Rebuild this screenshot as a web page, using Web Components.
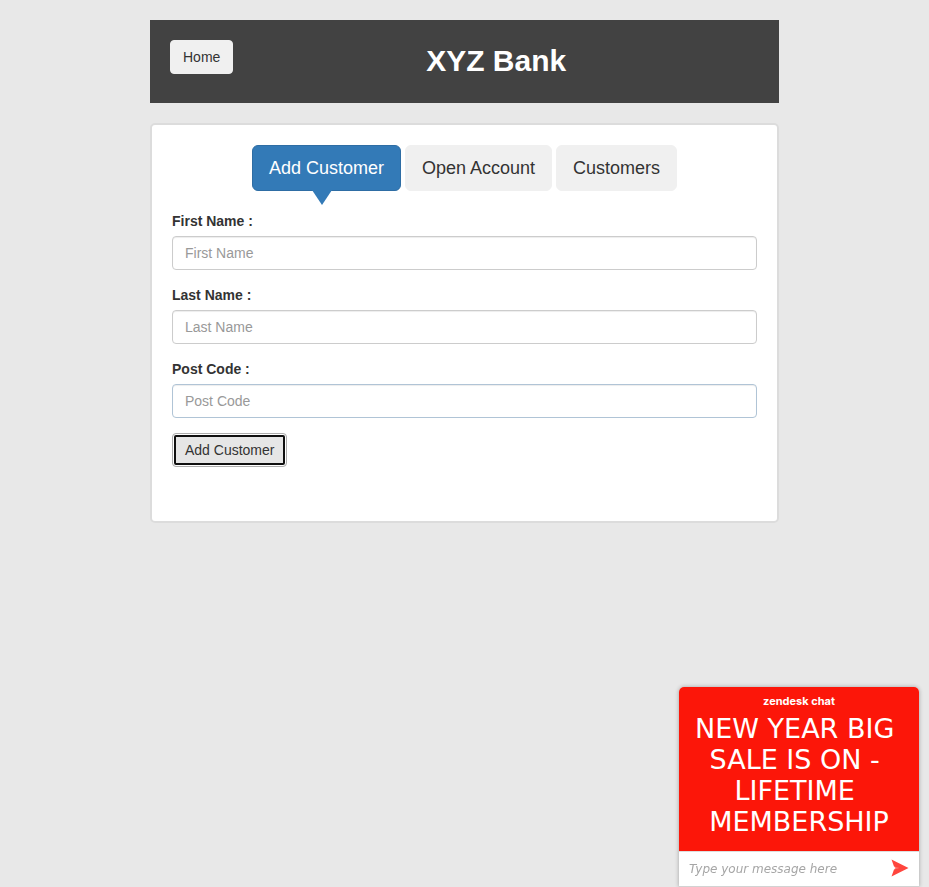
<!DOCTYPE html>
<html lang="en">
<head>
<meta charset="utf-8">
<meta name="viewport" content="width=device-width, initial-scale=1">
<title>XYZ Bank</title>
<style>
html,body{min-height:100%}
body{margin:0;background:#e8e8e8;color:#333;font:14px/20px "Liberation Sans",Arial,sans-serif}
main{margin:20px 150px;display:grid;gap:20px}
@media (max-width:760px){main{margin:20px}}
</style>
</head>
<body>
<main>
  <bank-header>XYZ Bank</bank-header>
  <bank-card>
    <bank-tabs slot="tabs">
      <bank-tab active>Add Customer</bank-tab>
      <bank-tab>Open Account</bank-tab>
      <bank-tab>Customers</bank-tab>
    </bank-tabs>
    <customer-form></customer-form>
  </bank-card>
</main>
<chat-widget>NEW YEAR BIG&nbsp;<br>SALE IS ON -&nbsp;<br>LIFETIME&nbsp;<br>MEMBERSHIP</chat-widget>
<script>
class Base extends HTMLElement{
  connectedCallback(){
    if(this.shadowRoot)return;
    this.attachShadow({mode:"open"}).innerHTML="<style>*{box-sizing:border-box}"+this.css()+"</style>"+this.html();
  }
}
customElements.define("bank-header",class extends Base{
  css(){return `
    :host{display:flex;align-items:flex-start;background:#424242;padding:20px 20px 22px}
    button{font:14px/20px "Liberation Sans",Arial,sans-serif;color:#333;background:#f0f0f0;border:1px solid #f0f0f0;border-radius:4px;padding:6px 12px}
    h1{flex:1;margin:0;text-align:center;color:#fff;font-size:30px;line-height:41px}`}
  html(){return `<button type="button">Home</button><h1><slot></slot></h1>`}
});
customElements.define("bank-card",class extends Base{
  css(){return `:host{display:block;background:#fff;border:2px solid #dcdcdc;border-radius:5px;padding:20px 20px 54px}`}
  html(){return `<slot name="tabs"></slot><slot></slot>`}
});
customElements.define("bank-tabs",class extends Base{
  css(){return `:host{display:flex;justify-content:center;gap:4px;margin-bottom:20px}`}
  html(){return `<slot></slot>`}
});
customElements.define("bank-tab",class extends Base{
  css(){return `
    :host{display:block;position:relative}
    button{font:18px/24px "Liberation Sans",Arial,sans-serif;color:#333;background:#f0f0f0;border:1px solid #f0f0f0;border-radius:6px;padding:10px 16px;white-space:nowrap}
    :host([active]) button{color:#fff;background:#337ab7;border-color:#2e6da4}
    :host([active])::after{content:"";position:absolute;top:45px;left:60px;border:solid transparent;border-width:15px 10px 0;border-top-color:#337ab7}`}
  html(){return `<button type="button"><slot></slot></button>`}
});
customElements.define("form-field",class extends Base{
  css(){return `
    :host{display:block;margin-bottom:15px}
    label{display:block;font-weight:bold;line-height:20px;margin-bottom:5px}
    input{display:block;width:100%;height:34px;font:14px/20px "Liberation Sans",Arial,sans-serif;color:#555;background:#fff;border:1px solid #ccc;border-radius:4px;padding:6px 12px;box-shadow:inset 0 1px 1px rgba(0,0,0,.075);outline:0}
    input::placeholder{color:#999;opacity:1}
    :host([tinted]) input{border-color:#b0c4d6}`}
  html(){const n=this.getAttribute("name");return `<label for="f">${n} :</label><input id="f" type="text" placeholder="${n}">`}
});
customElements.define("customer-form",class extends Base{
  css(){return `
    :host,form{display:block}
    button{display:block;font:14px/20px "Liberation Sans",Arial,sans-serif;color:#333;background:#e6e6e6;border:1px solid #adadad;border-radius:4px;padding:6px 12px;box-shadow:inset 0 0 0 2px #fff;outline:2px solid #101010;outline-offset:-4px}`}
  html(){return `<form><form-field name="First Name"></form-field><form-field name="Last Name"></form-field><form-field name="Post Code" tinted></form-field><button type="submit">Add Customer</button></form>`}
});
customElements.define("chat-widget",class extends Base{
  css(){return `
    :host{position:fixed;right:10px;bottom:0;width:240px;display:block;font-family:"DejaVu Sans",Verdana,sans-serif;border-radius:5px 5px 0 0;box-shadow:0 0 4px rgba(0,0,0,.3);overflow:hidden;background:#fff}
    header{background:#fc1609;color:#fff;text-align:center;padding:6px 0 14px}
    .brand{font:700 11px/16px Inter,sans-serif;padding-bottom:4px}
    .message{font-size:27px;line-height:31px}
    form{display:flex;align-items:center;justify-content:space-between;height:36px;padding:0 10px;border-top:1px solid #ddd;border-bottom:1px solid #d2d2d2}
    input{flex:1;min-width:0;border:0;padding:0;outline:0;background:none;font:italic 12px/20px "DejaVu Sans",Verdana,sans-serif;color:#555}
    input::placeholder{color:#a6a6a6;opacity:1}
    button{border:0;padding:0 0 2px;background:none;display:flex}
    svg{display:block}`}
  html(){return `<header><div class="brand">zendesk chat</div><div class="message"><slot></slot></div></header>
    <form><input type="text" aria-label="Message" placeholder="Type your message here"><button type="button" aria-label="Send"><svg width="18" height="18" viewBox="0 0 18 18"><path d="M0.500 0.500 17.500 9 0.500 17.500 3 10.500 8 9 3 7.500Z" fill="#ff453d"/><path d="M3 7.500 12 9 3 10.500 4.500 9Z" fill="#ff453d" fill-opacity=".75"/></svg></button></form>`}
});
</script>
</body>
</html>
